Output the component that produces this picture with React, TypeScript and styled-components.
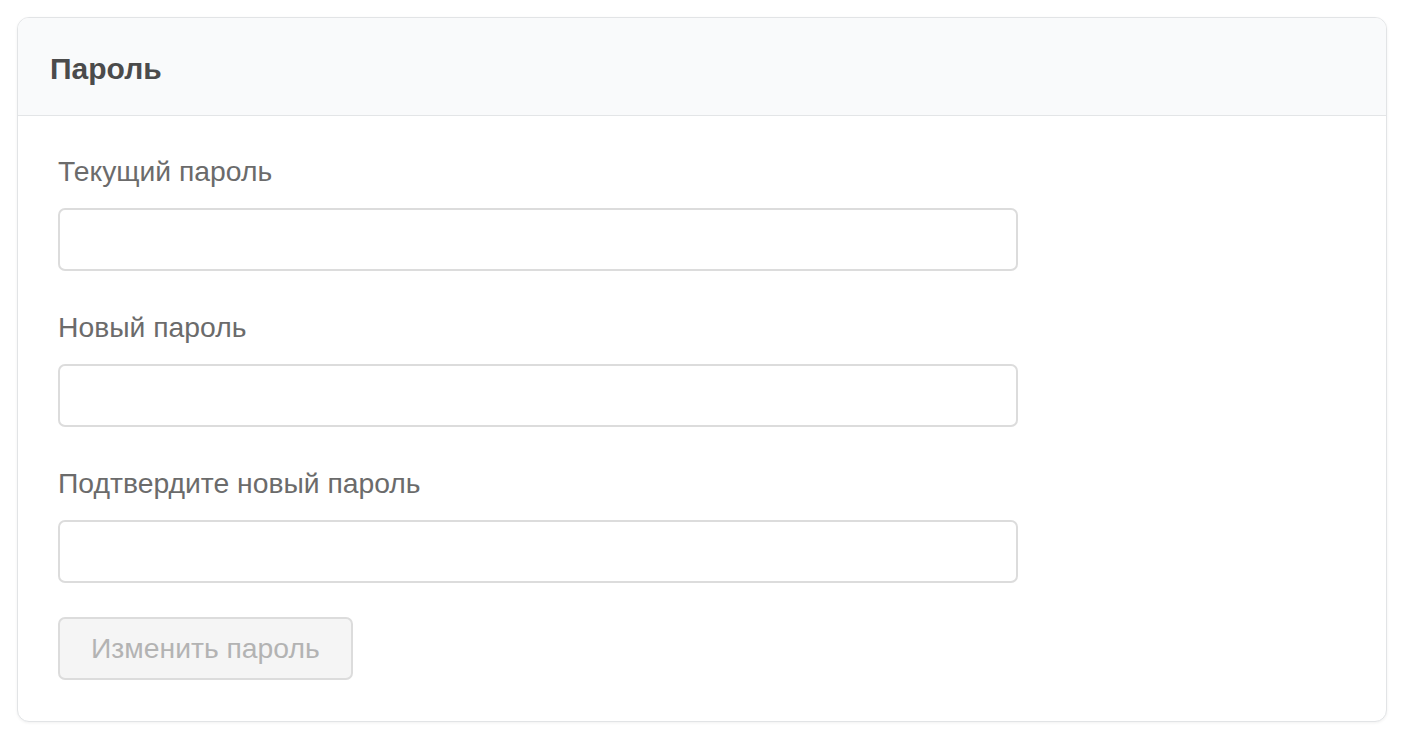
import styled, { createGlobalStyle } from "styled-components";

const GlobalStyle = createGlobalStyle`
    html, body {
        margin: 0;
        padding: 0;
        background: #ffffff;
    }
    body {
        font-family: "Liberation Sans", Arial, Helvetica, sans-serif;
    }
`

const Page = styled.div`
    padding: 17px 19px 21px 17px;
`

const Card = styled.section`
    border: 1px solid #e2e4e6;
    border-radius: 12px;
    background: #ffffff;
    box-shadow: 0 1px 3px rgba(0, 0, 0, 0.06);
    overflow: hidden;
`

const CardHeader = styled.header`
    display: flex;
    align-items: center;
    box-sizing: border-box;
    height: 98px;
    padding: 4px 32px 0;
    background: #f9fafb;
    border-bottom: 1px solid #e3e5e7;
`

const Title = styled.h2`
    margin: 0;
    font-size: 30px;
    font-weight: 700;
    color: #4b4b4b;
`

const CardBody = styled.form`
    display: flex;
    flex-direction: column;
    align-items: flex-start;
    padding: 37px 40px 41px;
`

const Field = styled.div`
    display: flex;
    flex-direction: column;
    width: 960px;
    & + & {
        margin-top: 38px;
    }
`

const Label = styled.label`
    font-size: 28.3px;
    line-height: 36px;
    color: #6b6b6b;
    margin-bottom: 19px;
`

const Input = styled.input`
    box-sizing: border-box;
    height: 63px;
    width: 100%;
    border: 2px solid #dcdcdc;
    border-radius: 7px;
    background: #ffffff;
    padding: 0 16px;
    font-family: inherit;
    font-size: 26px;
    outline: none;
`

const SubmitButton = styled.button`
    box-sizing: border-box;
    height: 63px;
    padding: 0 31px;
    margin-top: 34px;
    border: 2px solid #dcdcdc;
    border-radius: 7px;
    background: #f5f5f5;
    color: #b3b3b3;
    font-family: inherit;
    font-size: 28.3px;
    cursor: not-allowed;
`

const fields = [
    { id: "current", label: "Текущий пароль" },
    { id: "new", label: "Новый пароль" },
    { id: "confirm", label: "Подтвердите новый пароль" },
]

const App = () => (
    <Page>
        <GlobalStyle />
        <Card>
            <CardHeader>
                <Title>Пароль</Title>
            </CardHeader>
            <CardBody onSubmit={e => e.preventDefault()}>
                {fields.map(f => (
                    <Field key={f.id}>
                        <Label htmlFor={f.id}>{f.label}</Label>
                        <Input id={f.id} type="password" />
                    </Field>
                ))}
                <SubmitButton type="submit" disabled>
                    Изменить пароль
                </SubmitButton>
            </CardBody>
        </Card>
    </Page>
)

export default App
